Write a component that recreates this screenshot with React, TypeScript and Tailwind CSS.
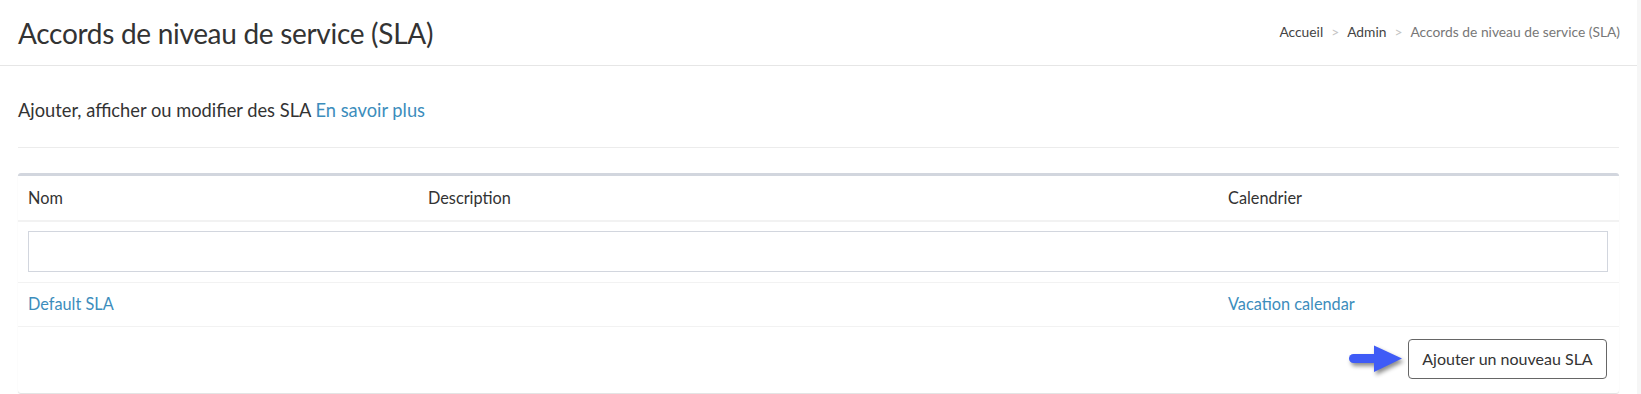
import { Fragment } from 'react';

const crumbs = [
  { label: 'Accueil', active: false },
  { label: 'Admin', active: false },
  { label: 'Accords de niveau de service (SLA)', active: true },
];

const columns = ['Nom', 'Description', 'Calendrier'];

const rows = [{ name: 'Default SLA', description: '', calendar: 'Vacation calendar' }];

function PointerArrow() {
  return (
    <svg
      width="58"
      height="30"
      viewBox="0 0 58 30"
      className="drop-shadow-[2px_3px_2px_rgba(0,0,0,0.45)]"
    >
      <rect x="2" y="10" width="32" height="9" rx="4.5" fill="#3f5bf6" />
      <path d="M27 1.5 L55 14.5 L27 28 Z" fill="#3f5bf6" />
    </svg>
  );
}

export default function App() {
  return (
    <div className="flex h-[394px] w-full bg-white font-['Lato','Noto_Sans',sans-serif] text-[#333]">
      <div className="flex-1">
        <header className="flex h-[66px] items-center justify-between border-b border-[#e6e6e6] pl-[18px] pr-[17px]">
          <h1 className="text-[28px] leading-none font-normal tracking-[-0.3px] text-[#333]">
            Accords de niveau de service (SLA)
          </h1>
          <ol className="flex items-center text-[13.8px]">
            {crumbs.map((c, i) => (
              <Fragment key={c.label}>
                {i > 0 && <span className="px-[8px] text-[#c4c4c4]">&gt;</span>}
                <li className={c.active ? 'text-[#777]' : 'text-[#444]'}>{c.label}</li>
              </Fragment>
            ))}
          </ol>
        </header>

        <main className="px-[18px]">
          <p className="mt-[32px] text-[18.3px] leading-[24px]">
            Ajouter, afficher ou modifier des SLA{' '}
            <a href="#" className="text-[#3c8dbc]">
              En savoir plus
            </a>
          </p>
          <hr className="mt-[25px] border-t border-[#ececec]" />

          <section className="mt-[25px] rounded-[3px] border-t-[3px] border-[#d2d6de] bg-white shadow-[0_1px_1px_rgba(0,0,0,0.12)]">
            <div className="grid h-[46px] grid-cols-[400px_800px_1fr] items-center border-b-2 border-[#f2f2f2] text-[16.3px]">
              {columns.map((col) => (
                <div key={col} className="px-[10px]">
                  {col}
                </div>
              ))}
            </div>

            <div className="border-b border-[#f2f2f2] pt-[9px] pr-[11px] pb-[10px] pl-[10px]">
              <input
                type="text"
                className="block h-[41px] w-full border border-[#d2d6de] bg-white outline-none"
              />
            </div>

            {rows.map((r) => (
              <div
                key={r.name}
                className="grid h-[44px] grid-cols-[400px_800px_1fr] items-center border-b border-[#f2f2f2] text-[16.3px]"
              >
                <a href="#" className="px-[10px] text-[#3c8dbc]">
                  {r.name}
                </a>
                <div className="px-[10px]">{r.description}</div>
                <a href="#" className="px-[10px] text-[#3c8dbc]">
                  {r.calendar}
                </a>
              </div>
            ))}

            <div className="flex items-center justify-end gap-[3px] pt-[12px] pr-[12px] pb-[14px]">
              <PointerArrow />
              <button className="h-[40px] w-[199px] rounded-[4px] border border-[#666] bg-white text-[16px] text-[#333]">
                Ajouter un nouveau SLA
              </button>
            </div>
          </section>
        </main>
      </div>
      <div className="w-[4px] bg-[#f6f6f6]" />
    </div>
  );
}
